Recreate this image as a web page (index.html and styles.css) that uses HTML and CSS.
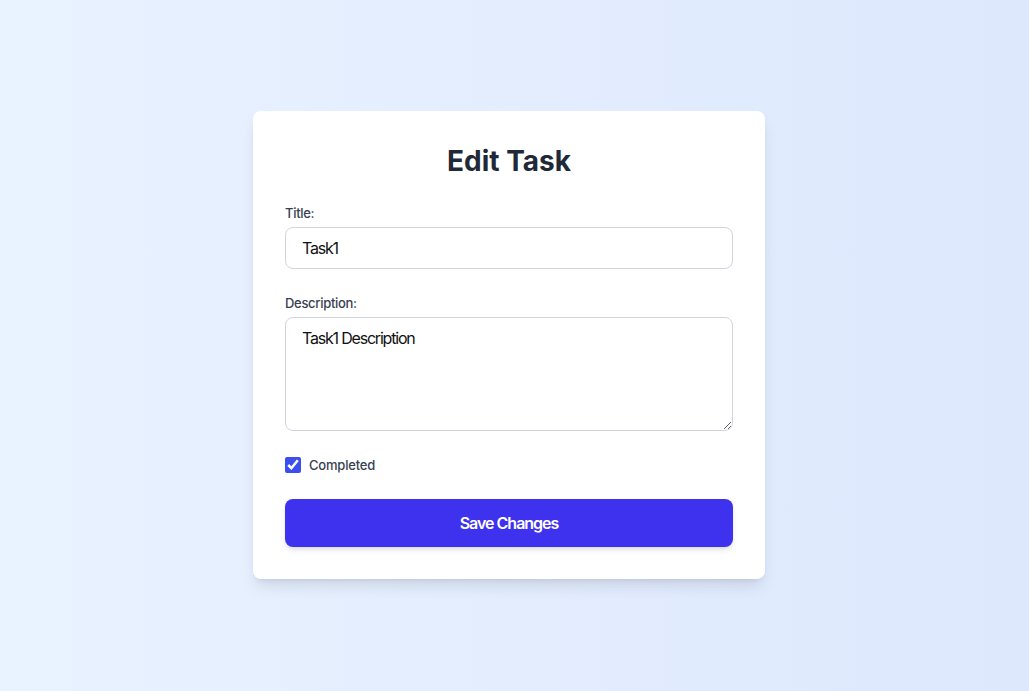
FILE: index.html
```html
<!DOCTYPE html>
<html lang="en">
<head>
<meta charset="utf-8">
<title>Edit Task</title>
<link rel="stylesheet" href="styles.css">
</head>
<body>
<main class="page">
  <form class="card">
    <h1 class="card-title">Edit Task</h1>
    <div class="field">
      <label class="label" for="title">Title:</label>
      <input class="input" id="title" type="text" value="Task1">
    </div>
    <div class="field">
      <label class="label" for="desc">Description:</label>
      <textarea class="input textarea" id="desc">Task1 Description</textarea>
    </div>
    <label class="check-row">
      <input class="check" type="checkbox" checked>
      <span>Completed</span>
    </label>
    <button class="btn" type="button">Save Changes</button>
  </form>
</main>
</body>
</html>
```
FILE: styles.css
```css
* { box-sizing: border-box; }
html, body { margin: 0; height: 100%; }
body {
  font-family: Inter, "Noto Sans", sans-serif;
  background: linear-gradient(to right, #e9f2ff, #dde8fd);
}
.page {
  min-height: 100%;
  display: flex;
  align-items: center;
  justify-content: center;
  padding-right: 11px;
  padding-bottom: 1px;
}
.card {
  width: 512px;
  background: #fff;
  border-radius: 8px;
  padding: 32px;
  box-shadow: 0 10px 15px -3px rgba(0,0,0,0.1), 0 4px 6px -4px rgba(0,0,0,0.1);
  display: flex;
  flex-direction: column;
  gap: 24px;
}
.card-title {
  margin: 0;
  text-align: center;
  font-size: 28px;
  line-height: 36px;
  font-weight: 700;
  color: #1f2937;
}
.field { display: flex; flex-direction: column; gap: 4px; }
.label {
  font-size: 13px;
  line-height: 20px;
  font-weight: 500;
  letter-spacing: -0.3px;
  color: #374151;
}
.input {
  width: 100%;
  height: 42px;
  border: 1px solid #d1d5db;
  border-radius: 8px;
  padding: 8px 16px;
  font-family: Inter, "Noto Sans", sans-serif;
  font-size: 16px;
  letter-spacing: -1.2px;
  color: #111;
  background: #fff;
}
.textarea {
  height: 114px;
  padding: 10px 16px;
  line-height: 20px;
  resize: vertical;
}
.check-row {
  display: flex;
  align-items: center;
  gap: 8px;
  height: 20px;
  font-size: 13px;
  font-weight: 500;
  letter-spacing: -0.2px;
  color: #374151;
}
.check {
  margin: 0;
  width: 16px;
  height: 16px;
  accent-color: #3b4ef0;
}
.btn {
  height: 48px;
  border: none;
  border-radius: 8px;
  background: #3e32ee;
  color: #fff;
  font-family: Inter, "Noto Sans", sans-serif;
  font-size: 16px;
  font-weight: 600;
  letter-spacing: -1px;
  box-shadow: 0 4px 6px -1px rgba(0,0,0,0.1), 0 2px 4px -2px rgba(0,0,0,0.1);
}
```
